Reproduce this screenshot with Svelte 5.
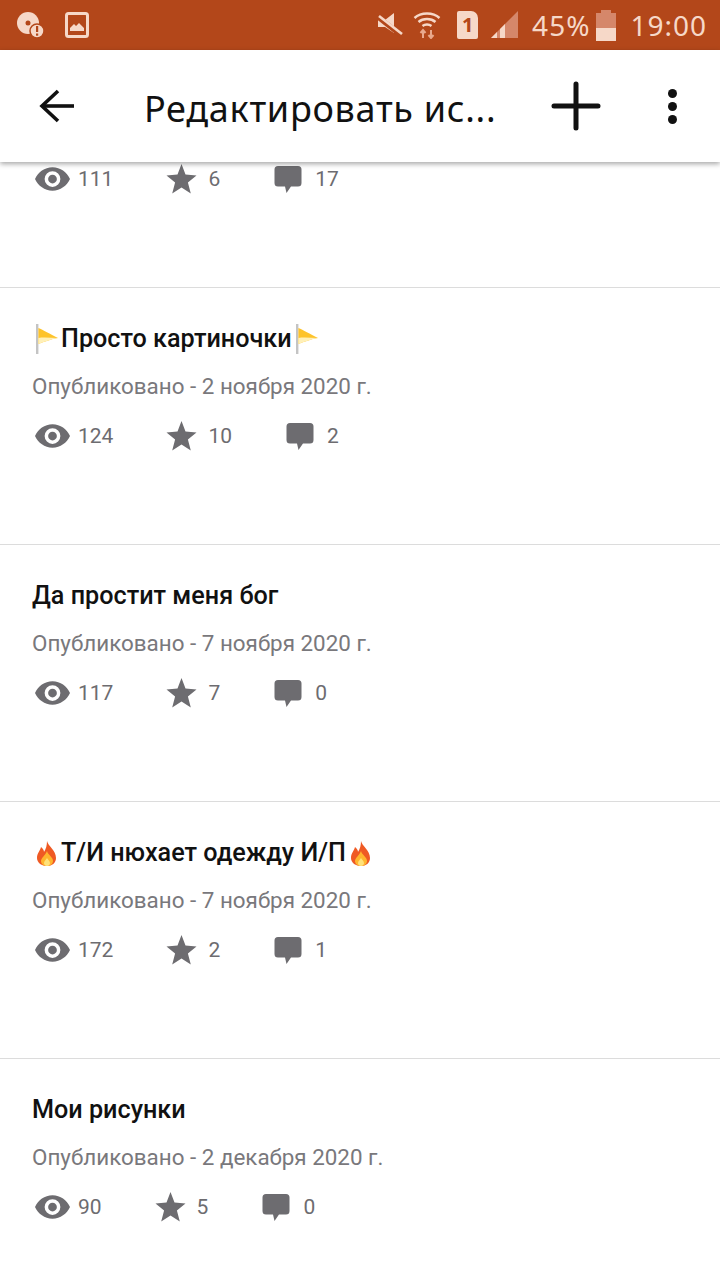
<script>
  // список историй на экране редактирования
  const stories = [
    { partial: true, views: 111, stars: 6, comments: 17 },
    { title: 'Просто картиночки', emoji: 'flag', date: '2 ноября 2020 г.', views: 124, stars: 10, comments: 2 },
    { title: 'Да простит меня бог', date: '7 ноября 2020 г.', views: 117, stars: 7, comments: 0 },
    { title: 'Т/И нюхает одежду И/П', emoji: 'fire', date: '7 ноября 2020 г.', views: 172, stars: 2, comments: 1 },
    { title: 'Мои рисунки', date: '2 декабря 2020 г.', views: 90, stars: 5, comments: 0 }
  ];
</script>

{#snippet flag()}
  <svg class="emoji" viewBox="0 0 29 30" aria-hidden="true">
    <rect x="4" y="0" width="2.4" height="30" fill="#c4c4c4" />
    <path d="M6.4 4 C11 6 18 10 26 14 C19 15 12 18 6.4 20 Z" fill="#fdc32b" />
    <path d="M6.4 14 C12 13 19 14 26 14 C19 15 12 18 6.4 20 Z" fill="#fff0b8" />
  </svg>
{/snippet}

{#snippet fire()}
  <svg class="emoji" viewBox="0 0 29 30" aria-hidden="true">
    <path d="M15 3 C16 8 24 12 24 20 C24 25 20 28 15 28 C10 28 5 25 5 20 C5 15 8 13 9 9 C11 11 12 12 12 14 C14 11 15 7 15 3 Z" fill="#ef5a24" />
    <path d="M15 13 C16 17 21 19 21 23 C21 26 18 28 15 28 C12 28 9 26 9 23 C9 20 13 18 15 13 Z" fill="#ffb52e" />
    <path d="M15 20 C16 22 18 23 18 25 C18 27 16.5 28 15 28 C13.5 28 12 27 12 25 C12 23 14 22 15 20 Z" fill="#ffe27a" />
  </svg>
{/snippet}

<div class="screen">
  <div class="status">
    <div class="status-left">
      <svg width="28" height="28" viewBox="0 0 28 28" aria-hidden="true">
        <circle cx="12" cy="12" r="11" fill="#f6d8c8" />
        <circle cx="12" cy="12" r="2.5" fill="#b3471a" />
        <circle cx="21" cy="20" r="7" fill="#f6d8c8" stroke="#b3471a" stroke-width="1.5" />
        <rect x="20" y="15" width="2.2" height="6" fill="#b3471a" />
        <rect x="20" y="22.5" width="2.2" height="2.2" fill="#b3471a" />
      </svg>
      <svg width="24" height="26" viewBox="0 0 24 26" aria-hidden="true">
        <rect x="1.5" y="1.5" width="21" height="23" rx="2" fill="none" stroke="#f6d8c8" stroke-width="3" />
        <path d="M5 19 L5 16 L9 12 L11 14 L14 11 L19 16 L19 19 Z" fill="#f6d8c8" />
      </svg>
    </div>
    <div class="status-right">
      <svg width="26" height="28" viewBox="0 0 26 28" aria-hidden="true">
        <path d="M1 9 H8 L17 2 V22 L8 16 H1 Z" fill="#f6d8c8" />
        <path d="M1 6 L25 25" stroke="#b3471a" stroke-width="5" />
        <path d="M2 5 L25 23" stroke="#f6d8c8" stroke-width="2.6" />
      </svg>
      <svg width="28" height="28" viewBox="0 0 28 28" fill="none" stroke="#f6d8c8" aria-hidden="true">
        <path d="M1.5 7 C8 1 20 1 26.5 7" stroke-width="2.4" />
        <path d="M5.5 11 C10 7 18 7 22.5 11" stroke-width="2.4" />
        <path d="M9.5 15 C12 13 16 13 18.5 15" stroke-width="2.4" />
        <path d="M10 27 V20 M7.5 22 L10 19 L12.5 22" stroke="#e9a88c" stroke-width="2" />
        <path d="M18 19 V26 M15.5 24 L18 27 L20.5 24" stroke="#e9a88c" stroke-width="2" />
      </svg>
      <div class="sim">1</div>
      <svg class="signal" width="28" height="28" viewBox="0 0 28 28" aria-hidden="true">
        <path d="M0 27 L27 0 V27 Z" fill="#d5876a" />
        <path d="M0 27 L6 21 V27 Z M9 27 V18 L14 13 V27 Z" fill="#f6d8c8" />
      </svg>
      <span class="pct">45%</span>
      <div class="battery"><div class="battery-cap"></div><div class="battery-body"><div class="battery-fill"></div></div></div>
      <span class="time">19:00</span>
    </div>
  </div>

  <header class="toolbar">
    <button class="icon-btn back" aria-label="Назад">
      <svg width="36" height="34" viewBox="0 0 36 34" fill="none" stroke="#111" stroke-width="3.6" aria-hidden="true">
        <path d="M19 2 L3 17 L19 32" />
        <path d="M3 17 H35" />
      </svg>
    </button>
    <h1>Редактировать ис...</h1>
    <button class="icon-btn plus" aria-label="Добавить">
      <svg width="50" height="50" viewBox="0 0 50 50" fill="none" stroke="#111" stroke-width="5" stroke-linecap="round" aria-hidden="true">
        <path d="M25 3 V47 M3 25 H47" />
      </svg>
    </button>
    <button class="icon-btn more" aria-label="Ещё">
      <span class="dot"></span><span class="dot"></span><span class="dot"></span>
    </button>
  </header>

  <main class="list">
    {#each stories as s}
      <article class="story" class:partial={s.partial}>
        {#if !s.partial}
          <h2>
            {#if s.emoji === 'flag'}{@render flag()}{:else if s.emoji === 'fire'}{@render fire()}{/if}{s.title}{#if s.emoji === 'flag'}{@render flag()}{:else if s.emoji === 'fire'}{@render fire()}{/if}
          </h2>
          <p class="date">Опубликовано - {s.date}</p>
        {/if}
        <div class="stats">
          <svg class="eye" width="35" height="24" viewBox="0 0 24 16" aria-hidden="true">
            <path fill-rule="evenodd" d="M12 0 C17.5 0 21.8 3.4 24 8 C21.8 12.6 17.5 16 12 16 C6.5 16 2.2 12.6 0 8 C2.2 3.4 6.5 0 12 0 Z M12 2.6 A5.4 5.4 0 1 0 12 13.4 A5.4 5.4 0 1 0 12 2.6 Z" fill="#6d6c70" />
            <circle cx="12" cy="8" r="3" fill="#6d6c70" />
          </svg>
          <span class="count views">{s.views}</span>
          <svg class="star" width="31" height="30" viewBox="0 0 30 30" aria-hidden="true">
            <path d="M15 0 L19 10.6 L30 11.4 L21.4 18.4 L24.3 29.5 L15 23.4 L5.7 29.5 L8.6 18.4 L0 11.4 L11 10.6 Z" fill="#6d6c70" />
          </svg>
          <span class="count stars">{s.stars}</span>
          <svg class="bubble" width="28" height="29" viewBox="0 0 28 29" aria-hidden="true">
            <path d="M4 1 H24 A3.5 3.5 0 0 1 27.5 4.5 V18 A3.5 3.5 0 0 1 24 21.5 H17 L12.5 28 L11 21.5 H4 A3.5 3.5 0 0 1 .5 18 V4.5 A3.5 3.5 0 0 1 4 1 Z" fill="#6d6c70" />
          </svg>
          <span class="count">{s.comments}</span>
        </div>
      </article>
    {/each}
  </main>
</div>

<style>
  :global(body) {
    margin: 0;
    background: #fff;
  }

  .screen {
    width: 720px;
    height: 1280px;
    overflow: hidden;
    font-family: Roboto, "Noto Sans", sans-serif;
    background: #fff;
  }

  .status {
    height: 50px;
    background: #b3471a;
    color: #f6d8c8;
    display: flex;
    align-items: center;
    justify-content: space-between;
    padding: 0 13px 0 16px;
    font-family: "Noto Sans", sans-serif;
  }

  .status-left,
  .status-right {
    display: flex;
    align-items: center;
  }

  .status-left {
    gap: 21px;
  }

  .status-right svg:first-child {
    margin-right: 10px;
  }

  .sim {
    width: 21px;
    height: 28px;
    margin: 0 13px 0 16px;
    background: #f6d8c8;
    color: #b3471a;
    border-radius: 2px 7px 2px 2px;
    font-size: 20px;
    font-weight: 700;
    line-height: 28px;
    text-align: center;
  }

  .signal {
    margin-right: 13px;
  }

  .pct {
    font-size: 28px;
    line-height: 32px;
    letter-spacing: 1px;
    margin-right: 6px;
  }

  .battery {
    width: 20px;
    margin-right: 14px;
  }

  .battery-cap {
    width: 10px;
    height: 3px;
    margin: 0 auto;
    background: #d5876a;
  }

  .battery-body {
    height: 28px;
    background: #d5876a;
    display: flex;
    align-items: flex-end;
  }

  .battery-fill {
    width: 100%;
    height: 13px;
    background: #f6d8c8;
  }

  .time {
    font-size: 28px;
    line-height: 32px;
    letter-spacing: 1px;
  }

  .toolbar {
    position: relative;
    z-index: 2;
    height: 112px;
    background: #fff;
    display: flex;
    align-items: center;
    box-shadow: 0 2px 5px rgba(0, 0, 0, 0.35);
  }

  .icon-btn {
    border: 0;
    padding: 0;
    background: none;
    display: flex;
    align-items: center;
    justify-content: center;
  }

  .back {
    margin-left: 39px;
    width: 36px;
  }

  h1 {
    margin: 6px 0 0 69px;
    width: 379px;
    font-family: "Noto Sans", sans-serif;
    font-size: 36px;
    font-weight: 400;
    letter-spacing: 0.7px;
    color: #111;
    white-space: nowrap;
    line-height: 40px;
  }

  .plus {
    margin-left: 28px;
    width: 50px;
  }

  .more {
    margin-left: 65px;
    flex-direction: column;
    gap: 4px;
    width: 12px;
  }

  .dot {
    width: 9px;
    height: 9px;
    border-radius: 50%;
    background: #111;
  }

  .story {
    border-bottom: 1px solid #dcdcdc;
    padding: 34px 0 0 32px;
    height: 222px;
  }

  .story.partial {
    height: 125px;
    padding-top: 0;
  }

  h2 {
    margin: 0;
    display: flex;
    align-items: center;
    height: 34px;
    font-size: 25.2px;
    font-weight: 500;
    color: #111;
    line-height: 34px;
  }

  .emoji {
    width: 29px;
    height: 30px;
    flex: none;
  }

  .date {
    margin: 14px 0 0;
    font-size: 22.4px;
    line-height: 32px;
    color: #79787c;
  }

  .stats {
    display: flex;
    align-items: center;
    height: 34px;
    margin-top: 17px;
    margin-left: 3px;
    color: #6d6c70;
  }

  .partial .stats {
    margin-top: 0;
  }

  .count {
    font-size: 21px;
    line-height: 34px;
  }

  .eye {
    margin-right: 8px;
  }

  .views {
    margin-right: 53px;
  }

  .star {
    margin-right: 11px;
  }

  .stars {
    margin-right: 54px;
  }

  .bubble {
    margin-right: 13px;
  }
</style>
